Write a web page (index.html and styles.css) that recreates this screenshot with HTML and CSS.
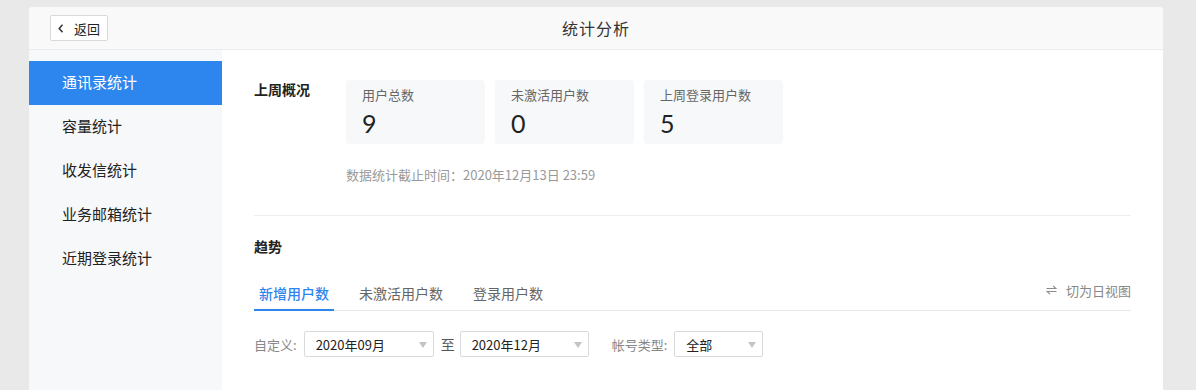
FILE: index.html
```html
<!DOCTYPE html>
<html lang="zh-CN">
<head>
<meta charset="utf-8">
<title>统计分析</title>
<link rel="stylesheet" href="styles.css">
</head>
<body>
<div class="page">
  <header class="topbar">
    <div class="topbar-left">
      <button class="back-btn" type="button">
        <svg class="back-icon" width="6" height="9" viewBox="0 0 6 9"><polyline points="4.5,0.8 1.2,4.5 4.5,8.2" fill="none" stroke="#333" stroke-width="1.5"/></svg>
        <span>返回</span>
      </button>
    </div>
    <h1 class="title">统计分析</h1>
    <div class="topbar-right"></div>
  </header>
  <div class="body">
    <nav class="sidebar">
      <a class="nav-item active">通讯录统计</a>
      <a class="nav-item">容量统计</a>
      <a class="nav-item">收发信统计</a>
      <a class="nav-item">业务邮箱统计</a>
      <a class="nav-item">近期登录统计</a>
    </nav>
    <main class="main">
      <section class="overview">
        <h2 class="section-title overview-title">上周概况</h2>
        <div class="overview-body">
          <div class="stats">
            <div class="stat">
              <div class="stat-label">用户总数</div>
              <div class="stat-value">9</div>
            </div>
            <div class="stat">
              <div class="stat-label">未激活用户数</div>
              <div class="stat-value">0</div>
            </div>
            <div class="stat">
              <div class="stat-label">上周登录用户数</div>
              <div class="stat-value">5</div>
            </div>
          </div>
          <p class="note">数据统计截止时间：2020年12月13日 23:59</p>
        </div>
      </section>
      <hr class="divider">
      <section class="trend">
        <h2 class="section-title">趋势</h2>
        <div class="tabs">
          <div class="tab-list">
            <a class="tab active">新增用户数</a>
            <a class="tab">未激活用户数</a>
            <a class="tab">登录用户数</a>
          </div>
          <a class="switch-view">
            <svg width="11" height="10" viewBox="0 0 11 10"><path d="M0.5 3.5H10L7 0.8" fill="none" stroke="#8c8c8c" stroke-width="1.1"/><path d="M10.5 6.5H1L4 9.2" fill="none" stroke="#8c8c8c" stroke-width="1.1"/></svg>
            <span>切为日视图</span>
          </a>
        </div>
        <div class="filters">
          <span class="filter-label">自定义:</span>
          <div class="select sel-month"><span>2020年09月</span><i class="caret"></i></div>
          <span class="to">至</span>
          <div class="select sel-month2"><span>2020年12月</span><i class="caret"></i></div>
          <span class="filter-label type-label">帐号类型:</span>
          <div class="select sel-type"><span>全部</span><i class="caret"></i></div>
        </div>
      </section>
    </main>
  </div>
</div>
</body>
</html>
```

FILE: styles.css
```css
* { box-sizing: border-box; }
html, body { margin: 0; padding: 0; }
body {
  background: #e9e9e9;
  font-family: "Noto Sans CJK SC", "Noto Sans", sans-serif;
  color: #333;
  height: 390px;
  overflow: hidden;
}
.page {
  margin: 7px 0 0 29px;
  width: 1134px;
  background: #fff;
  border-radius: 4px 4px 0 0;
  overflow: hidden;
}
.topbar {
  height: 43px;
  background: #f9f9f9;
  border-bottom: 1px solid #ececec;
  display: grid;
  grid-template-columns: 1fr auto 1fr;
  align-items: center;
}
.topbar-left { padding-left: 21px; }
.back-btn {
  display: flex;
  align-items: center;
  gap: 10px;
  height: 26px;
  width: 58px;
  padding: 0 0 0 7px;
  background: #fff;
  border: 1px solid #d9d9d9;
  border-radius: 2px;
  font-family: inherit;
  font-size: 13px;
  color: #222;
  line-height: 1;
}
.title {
  margin: 0;
  font-size: 16px;
  font-weight: 400;
  color: #333;
  letter-spacing: 1px;
}
.body { display: flex; min-height: 340px; }
.sidebar {
  width: 193px;
  flex: none;
  background: #f7f8fa;
  padding-top: 11px;
  display: flex;
  flex-direction: column;
}
.nav-item {
  height: 44px;
  line-height: 42px;
  padding: 0 0 2px 33px;
  font-size: 15px;
  color: #222;
}
.nav-item.active { background: #2d86ed; color: #fff; }
.main { flex: 1; padding: 29px 32px 0 32px; }
.section-title {
  margin: 0;
  font-size: 14px;
  font-weight: 700;
  line-height: 20px;
  color: #222;
}
.overview { display: flex; }
.overview-title { width: 92px; flex: none; }
.stats { display: flex; gap: 10px; margin-top: 1px; }
.stat {
  width: 139px;
  height: 64px;
  background: #f7f8fa;
  border-radius: 4px;
  padding: 6px 16px 0;
}
.stat-label { font-size: 13px; line-height: 18px; color: #666; }
.stat-value {
  margin-top: 5px;
  font-family: "Lato", "Open Sans", sans-serif;
  font-size: 25px;
  line-height: 28px;
  color: #222;
}
.note {
  margin: 22px 0 0;
  font-size: 13px;
  line-height: 18px;
  color: #999;
}
.divider {
  margin: 31px 0 0;
  border: 0;
  border-top: 1px solid #eeeeee;
}
.trend { padding-top: 20px; }
.tabs {
  margin-top: 27px;
  display: flex;
  justify-content: space-between;
  border-bottom: 1px solid #e8e8e8;
}
.tab-list { display: flex; gap: 20px; }
.tab {
  padding: 0 5px 6px;
  font-size: 14px;
  line-height: 20px;
  color: #666;
  border-bottom: 2px solid transparent;
  margin-bottom: -1px;
}
.tab.active { color: #2d86ed; border-bottom-color: #2d86ed; font-weight: 500; }
.switch-view {
  display: flex;
  align-items: center;
  gap: 9px;
  height: 18px;
  margin-top: -2px;
  font-size: 13px;
  color: #888;
}
.filters {
  margin-top: 20px;
  display: flex;
  align-items: center;
  font-size: 13px;
}
.filter-label { color: #888; margin-right: 7px; }
.select {
  position: relative;
  height: 26px;
  border: 1px solid #d9d9d9;
  border-radius: 2px;
  padding-left: 11px;
  display: flex;
  align-items: center;
  color: #222;
  background: #fff;
}
.sel-month { width: 130px; }
.sel-month2 { width: 129px; }
.sel-type { width: 89px; }
.caret {
  position: absolute;
  right: 6px;
  top: 10px;
  width: 0;
  height: 0;
  border-left: 4px solid transparent;
  border-right: 4px solid transparent;
  border-top: 6px solid #c4c4c4;
}
.to { margin: 0 5px 0 7px; color: #555; font-size: 14px; }
.type-label { margin-left: 23px; }
```
